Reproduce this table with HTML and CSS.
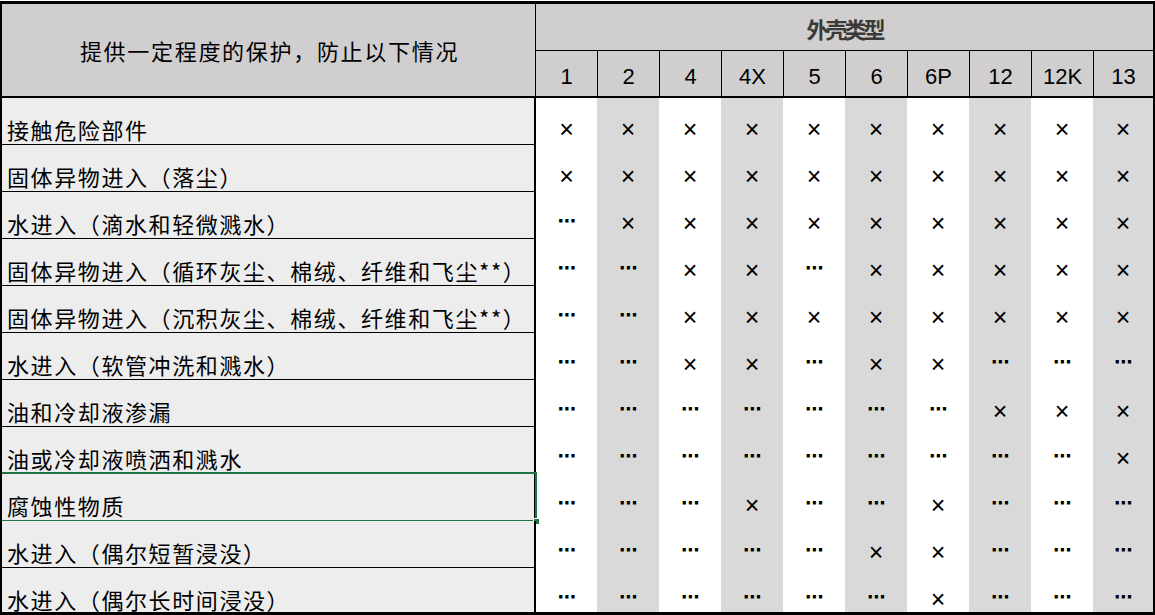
FILE: index.html
```html
<!DOCTYPE html>
<html lang="zh-CN">
<head>
<meta charset="utf-8">
<title>外壳类型</title>
<link rel="stylesheet" href="styles.css">
</head>
<body>
<div class="sheet">
  <div class="head">
    <div class="h-desc">提供一定程度的保护，防止以下情况</div>
    <div class="h-type">外壳类型</div>
    <div class="h-num first">1</div>
    <div class="h-num">2</div>
    <div class="h-num">4</div>
    <div class="h-num">4X</div>
    <div class="h-num">5</div>
    <div class="h-num">6</div>
    <div class="h-num">6P</div>
    <div class="h-num">12</div>
    <div class="h-num">12K</div>
    <div class="h-num">13</div>
  </div>
  <div class="grid">
    <div class="label">接触危险部件</div>
    <div class="c">×</div><div class="c g">×</div><div class="c">×</div><div class="c g">×</div><div class="c">×</div><div class="c g">×</div><div class="c">×</div><div class="c g">×</div><div class="c">×</div><div class="c g">×</div>

    <div class="label">固体异物进入（落尘）</div>
    <div class="c">×</div><div class="c g">×</div><div class="c">×</div><div class="c g">×</div><div class="c">×</div><div class="c g">×</div><div class="c">×</div><div class="c g">×</div><div class="c">×</div><div class="c g">×</div>

    <div class="label">水进入（滴水和轻微溅水）</div>
    <div class="c d">⋯</div><div class="c g">×</div><div class="c">×</div><div class="c g">×</div><div class="c">×</div><div class="c g">×</div><div class="c">×</div><div class="c g">×</div><div class="c">×</div><div class="c g">×</div>

    <div class="label">固体异物进入（循环灰尘、棉绒、纤维和飞尘**）</div>
    <div class="c d">⋯</div><div class="c g d">⋯</div><div class="c">×</div><div class="c g">×</div><div class="c d">⋯</div><div class="c g">×</div><div class="c">×</div><div class="c g">×</div><div class="c">×</div><div class="c g">×</div>

    <div class="label">固体异物进入（沉积灰尘、棉绒、纤维和飞尘**）</div>
    <div class="c d">⋯</div><div class="c g d">⋯</div><div class="c">×</div><div class="c g">×</div><div class="c">×</div><div class="c g">×</div><div class="c">×</div><div class="c g">×</div><div class="c">×</div><div class="c g">×</div>

    <div class="label">水进入（软管冲洗和溅水）</div>
    <div class="c d">⋯</div><div class="c g d">⋯</div><div class="c">×</div><div class="c g">×</div><div class="c d">⋯</div><div class="c g">×</div><div class="c">×</div><div class="c g d">⋯</div><div class="c d">⋯</div><div class="c g d">⋯</div>

    <div class="label">油和冷却液渗漏</div>
    <div class="c d">⋯</div><div class="c g d">⋯</div><div class="c d">⋯</div><div class="c g d">⋯</div><div class="c d">⋯</div><div class="c g d">⋯</div><div class="c d">⋯</div><div class="c g">×</div><div class="c">×</div><div class="c g">×</div>

    <div class="label">油或冷却液喷洒和溅水</div>
    <div class="c d">⋯</div><div class="c g d">⋯</div><div class="c d">⋯</div><div class="c g d">⋯</div><div class="c d">⋯</div><div class="c g d">⋯</div><div class="c d">⋯</div><div class="c g d">⋯</div><div class="c d">⋯</div><div class="c g">×</div>

    <div class="label selected">腐蚀性物质<span class="sel-box"><span class="sel-handle"></span></span></div>
    <div class="c d">⋯</div><div class="c g d">⋯</div><div class="c d">⋯</div><div class="c g">×</div><div class="c d">⋯</div><div class="c g d">⋯</div><div class="c">×</div><div class="c g d">⋯</div><div class="c d">⋯</div><div class="c g d">⋯</div>

    <div class="label">水进入（偶尔短暂浸没）</div>
    <div class="c d">⋯</div><div class="c g d">⋯</div><div class="c d">⋯</div><div class="c g d">⋯</div><div class="c d">⋯</div><div class="c g">×</div><div class="c">×</div><div class="c g d">⋯</div><div class="c d">⋯</div><div class="c g d">⋯</div>

    <div class="label">水进入（偶尔长时间浸没）</div>
    <div class="c d">⋯</div><div class="c g d">⋯</div><div class="c d">⋯</div><div class="c g d">⋯</div><div class="c d">⋯</div><div class="c g d">⋯</div><div class="c">×</div><div class="c g d">⋯</div><div class="c d">⋯</div><div class="c g d">⋯</div>
  </div>
</div>
</body>
</html>
```
FILE: styles.css
```css
html, body {
  margin: 0;
  padding: 0;
  background: #ffffff;
}

body {
  font-family: "Noto Sans CJK SC", "Noto Sans", sans-serif;
  color: #000;
}

.sheet {
  width: 1151px;
  height: 608px;
  margin-top: 1px;
  border-top: 3px solid #000;
  border-left: 2px solid #000;
  border-right: 2px solid #000;
  border-bottom: 3px solid #000;
  overflow: hidden;
}

.head {
  display: grid;
  grid-template-columns: 534px 61px repeat(8, 62px) 60px;
  grid-template-rows: 47px 45px;
  background: #d0cece;
  border-bottom: 2px solid #000;
}

.h-desc {
  grid-row: 1 / 3;
  grid-column: 1;
  border-right: 1px solid #000;
  display: flex;
  align-items: center;
  justify-content: center;
  font-size: 22px;
  letter-spacing: 1.7px;
  padding-left: 2px;
}

.h-type {
  grid-row: 1;
  grid-column: 2 / -1;
  border-bottom: 1px solid #000;
  display: flex;
  align-items: center;
  justify-content: center;
  font-size: 22px;
  font-weight: 700;
  letter-spacing: -3px;
  color: #3b3838;
  padding-top: 2px;
}

.h-num {
  grid-row: 2;
  border-left: 1px solid #000;
  display: flex;
  align-items: center;
  justify-content: center;
  font-family: "Liberation Sans", Arial, sans-serif;
  font-size: 22px;
  padding-top: 6px;
}

.h-num.first {
  border-left: none;
}

.grid {
  display: grid;
  grid-template-columns: 534px 61px repeat(8, 62px) 60px;
  grid-auto-rows: 47px;
}

.label {
  position: relative;
  box-sizing: border-box;
  background: #ededed;
  border-right: 2px solid #000;
  border-bottom: 1px solid #000;
  display: flex;
  align-items: flex-end;
  padding-left: 5px;
  padding-bottom: 3px;
  font-size: 22px;
  line-height: 24px;
  letter-spacing: 1.6px;
  white-space: nowrap;
}

.c {
  background: #ffffff;
  display: flex;
  align-items: flex-end;
  justify-content: center;
  padding-bottom: 4px;
  box-sizing: border-box;
  font-family: "Liberation Sans", Arial, sans-serif;
  font-size: 25px;
  line-height: 24px;
}

.c.g {
  background: #d9d9d9;
}

.c.d {
  font-family: "DejaVu Sans", sans-serif;
  font-size: 18px;
  font-weight: 700;
  padding-bottom: 6px;
}

.sel-box {
  position: absolute;
  left: -2px;
  top: -2px;
  right: -3px;
  bottom: -2px;
  border: 2px solid #217346;
}

.sel-handle {
  position: absolute;
  right: -5px;
  bottom: -5px;
  width: 5px;
  height: 5px;
  background: #217346;
  border: 1px solid #ffffff;
}
```
